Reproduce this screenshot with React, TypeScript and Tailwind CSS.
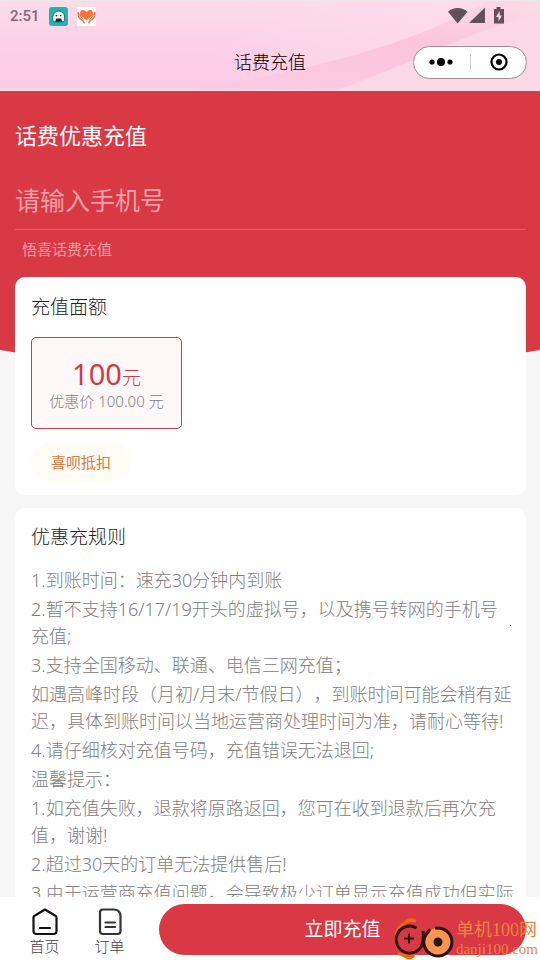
import React from "react";

const rules = [
  "1.到账时间：速充30分钟内到账",
  "2.暂不支持16/17/19开头的虚拟号，以及携号转网的手机号充值;",
  "3.支持全国移动、联通、电信三网充值；",
  "如遇高峰时段（月初/月末/节假日），到账时间可能会稍有延迟，具体到账时间以当地运营商处理时间为准，请耐心等待!",
  "4.请仔细核对充值号码，充值错误无法退回;",
  "温馨提示：",
  "1.如充值失败，退款将原路返回，您可在收到退款后再次充值，谢谢!",
  "2.超过30天的订单无法提供售后!",
  "3.由于运营商充值问题，会导致极少订单显示充值成功但实际",
];

function GhostIcon() {
  return (
    <svg viewBox="0 0 19 19" className="size-[19px]" aria-hidden="true">
      <rect width="19" height="19" rx="3" fill="#1fb5b5" />
      <path d="M3.800 13.500V10a5.900 5.900 0 0 1 11.800 0v3.500l-1.500 1.300H5.300z" fill="#fff" stroke="#14403f" strokeWidth="0.7" />
      <circle cx="7.600" cy="8.700" r="0.8" fill="#222" />
      <circle cx="11.800" cy="8.700" r="0.8" fill="#222" />
      <path d="M7.200 11.500h5l1 3.200H6.200z" fill="#1c2b2b" />
    </svg>
  );
}

function HeartIcon() {
  return (
    <svg viewBox="0 0 19 19" className="size-[19px]" aria-hidden="true">
      <rect width="19" height="19" fill="#fff" />
      <path d="M9.500 13.500 3.500 8C2.500 5 3.500 3 5.800 3c1.700 0 3 1 3.700 2.200C10.200 4 11.500 3 13.200 3c2.300 0 3.300 2 2.300 5z" fill="#f4743b" />
      <path d="M1.300 5c-.5 5 1.500 7.500 4.500 8.500l1.700 2.800M17.700 5c.5 5-1.500 7.500-4.500 8.500l-1.700 2.800" fill="none" stroke="#f4743b" strokeWidth="1.500" />
      <path d="M3 6.500c.3 3 2.500 5 4.300 5.700M16 6.500c-.3 3-2.500 5-4.300 5.700" fill="none" stroke="#f4743b" strokeWidth="1.600" />
      <path d="M4.500 9.500 7 12l1.500 3M14.500 9.500 12 12l-1.500 3" fill="none" stroke="#fff" strokeWidth="0.800" />
    </svg>
  );
}

function StatusIcons() {
  return (
    <svg viewBox="0 0 58 18" className="h-[18px] w-[58px]" fill="#62505a" aria-hidden="true">
      <path d="M0 4.700C5.500-.3 14-.3 19.500 4.700L9.700 16.500z" />
      <path d="M37 .5V16H21z" />
      <path d="M48.500 0h4v2H56v14.500H46V2h2.500z" />
      <path d="M51.700 4 48 10h2.500v4.500L54 8.500h-2.300z" fill="#fbd3e6" />
    </svg>
  );
}

function HeaderWaves() {
  return (
    <svg viewBox="0 0 540 91" preserveAspectRatio="none" className="absolute inset-0 size-full" aria-hidden="true">
      <defs>
        <linearGradient id="base" x1="0" y1="0" x2="0" y2="1">
          <stop offset="0" stopColor="#fcdcea" />
          <stop offset="0.500" stopColor="#fdd1e8" />
          <stop offset="1" stopColor="#fccae3" />
        </linearGradient>
        <linearGradient id="wave" x1="0" y1="1" x2="1" y2="0">
          <stop offset="0" stopColor="#fccbe3" />
          <stop offset="0.600" stopColor="#fbc6dc" />
          <stop offset="1" stopColor="#fcdce6" />
        </linearGradient>
        <linearGradient id="glow" x1="0" y1="0" x2="1" y2="0">
          <stop offset="0" stopColor="#fcdce9" stopOpacity="0" />
          <stop offset="1" stopColor="#fcdcea" />
        </linearGradient>
      </defs>
      <rect width="540" height="91" fill="url(#base)" />
      <path d="M215 50C270 30 330 0 350 0h150c-70 45-170 70-285 85z" fill="url(#glow)" />
      <path d="M200 88C330 68 430 36 490 0h50v20C460 45 400 75 300 91H200z" fill="url(#wave)" />
      <path d="M335 91C410 65 470 30 540 14v77z" fill="#fcd8e7" />
      <rect width="540" height="1" fill="#efe6ec" />
      <rect y="90" width="540" height="1" fill="#fbe3ea" />
    </svg>
  );
}

function Watermark() {
  return (
    <div className="pointer-events-none absolute right-0 bottom-0 flex items-center font-normal text-[#f0843f]">
      <svg viewBox="0 0 64 44" className="h-[44px] w-[64px]" fill="none" aria-hidden="true">
        <path d="M24 3.500C18 1 15 3 12 6 3 10 0 21 4 31l3 4 2-2C3 25 4 13 14 8c3-2 5-2 10-1.500z" fill="#f4650f" />
        <path d="M6 36c5 2 9 3 18 1l-1 3c-1 3-6 4-9 2.500-2-1.500-5-2-8-4z" fill="#f4650f" />
        <path d="M24.500 12A13.500 13.500 0 1 0 29 31c2-4 3-8 2-16" stroke="#2b1414" strokeWidth="3" />
        <path d="M12 22.500h10M17 17.500v10" stroke="#2b1414" strokeWidth="2" />
        <circle cx="46" cy="26" r="14" fill="#fb9550" />
        <path d="M43 12.300A14 14 0 1 1 34 18.600q2-2 4-5.600" stroke="#2b1414" strokeWidth="3" />
        <circle cx="46" cy="26" r="4.500" fill="#2b1414" />
      </svg>
      <div className="pt-0.5 pr-0.5 font-['Liberation_Serif','Noto_Sans_CJK_SC',serif]">
        <p className="text-[18px] leading-[20px]">单机100网</p>
        <p className="text-[15px] leading-[18px]">danji100.com</p>
      </div>
    </div>
  );
}

export default function App() {
  return (
    <div className="relative flex h-screen flex-col overflow-hidden bg-[#f7f7f7] font-['Noto_Sans','Noto_Sans_CJK_SC',sans-serif] font-light">
      <header className="relative h-[91px] shrink-0">
        <HeaderWaves />
        <div className="relative flex h-8 items-center justify-between pr-[34px] pl-[10px]">
          <div className="flex items-center gap-[9px]">
            <span className="font-['Roboto',sans-serif] text-[15px] leading-none font-medium text-[#86667a]">2:51</span>
            <GhostIcon />
            <HeartIcon />
          </div>
          <StatusIcons />
        </div>
        <div className="relative grid h-[60px] grid-cols-[1fr_auto_1fr] items-center pr-[13px]">
          <h1 className="col-start-2 pl-[13px] text-[18px] leading-6 text-black">话费充值</h1>
          <div className="flex h-[33px] w-[114px] items-center justify-self-end rounded-full border border-[#a08c96] bg-white">
            <button type="button" aria-label="更多" className="flex flex-1 justify-center pr-0.5">
              <svg viewBox="0 0 24 10" className="h-[10px] w-6" aria-hidden="true">
                <circle cx="3" cy="5" r="2.600" />
                <circle cx="12" cy="5" r="4" />
                <circle cx="21" cy="5" r="2.600" />
              </svg>
            </button>
            <span className="h-4 w-px bg-[#d0d0d0]" />
            <button type="button" aria-label="关闭" className="flex flex-1 justify-center pl-0.5">
              <svg viewBox="0 0 18 18" className="size-[18px]" aria-hidden="true">
                <circle cx="9" cy="9" r="7.500" fill="none" stroke="#000" strokeWidth="2.200" />
                <circle cx="9" cy="9" r="3" />
              </svg>
            </button>
          </div>
        </div>
      </header>

      <main className="relative min-h-0 flex-1 overflow-hidden">
        <svg viewBox="0 0 540 284" preserveAspectRatio="none" className="absolute inset-x-0 top-0 h-[284px] w-full" aria-hidden="true">
          <path d="M0 0h540v259q-270 46-540 0z" fill="#d93845" />
        </svg>
        <div className="relative pt-[28px] pr-[14px] pl-[15px]">
          <label htmlFor="phone" className="block text-[22px] leading-8 font-normal text-white">话费优惠充值</label>
          <input
            id="phone"
            type="tel"
            placeholder="请输入手机号"
            className="mt-[20px] block h-[59px] w-full border-b border-[#e3606b] bg-transparent text-[25px] font-normal text-white outline-none placeholder:text-[#f0a0a6]"
          />
          <p className="mt-[7px] pl-[7px] text-[15px] leading-6 font-normal text-[#f0a0a6]">悟喜话费充值</p>

          <section className="mt-[16px] rounded-[10px] bg-white px-4 pt-4 pb-[14px]">
            <h3 className="text-[19px] leading-7 text-[#222]">充值面额</h3>
            <button type="button" className="mt-4 flex h-[92px] w-[151px] flex-col items-center justify-center rounded-[5px] border border-[#c8404f] bg-[#fef8f8] pt-[6px]">
              <span className="text-[29px] leading-[26px] font-normal text-[#d03a48]">
                100<span className="text-[19px] font-light">元</span>
              </span>
              <span className="text-[15px] leading-5 text-[#808080]">优惠价 100.00 元</span>
            </button>
            <button type="button" className="mt-[14px] block h-[38px] rounded-full bg-[#fffcf6] px-5 text-[15px] font-normal text-[#e07840]">喜呗抵扣</button>
          </section>

          <section className="relative mt-[13px] rounded-[10px] bg-white pt-[15px] pr-[11px] pl-4">
            <h3 className="text-[19px] leading-7 text-[#222]">优惠充规则</h3>
            <div className="mt-[16px] flex flex-col gap-0.5 text-[18px] leading-[27px] text-[#808080] [text-spacing-trim:space-all]">
              {rules.map((rule) => (
                <p key={rule}>{rule}</p>
              ))}
            </div>
            <span className="absolute top-[117px] right-[15px] size-px bg-[#555]" />
          </section>
        </div>
      </main>

      <footer className="relative flex h-[63px] shrink-0 items-center bg-white pt-[2px] pr-[14px] pl-3">
        <a href="#home" className="flex w-[65px] flex-col items-center pt-1 text-[15px] leading-5 text-[#444]">
          <svg viewBox="0 0 28 28" className="size-[28px]" fill="none" stroke="#111" strokeWidth="2.200" strokeLinejoin="round" strokeLinecap="round" aria-hidden="true">
            <path d="M4 7.500 14 1.500l10 6a2 2 0 0 1 1.500 2V23a3 3 0 0 1-3 3h-17a3 3 0 0 1-3-3V9.500a2 2 0 0 1 1.500-2zM9 20h10" />
          </svg>
          首页
        </a>
        <a href="#orders" className="flex w-[65px] flex-col items-center pt-1 text-[15px] leading-5 text-[#444]">
          <svg viewBox="0 0 28 28" className="size-[28px]" fill="none" stroke="#333" strokeWidth="2.200" strokeLinejoin="round" strokeLinecap="round" aria-hidden="true">
            <path d="M7 1.500H18q6.500.5 6.500 6.500v15a3 3 0 0 1-3 3H7a3 3 0 0 1-3-3V4.500a3 3 0 0 1 3-3zM9.500 14.500h9.500M9.500 19h9.500" />
          </svg>
          订单
        </a>
        <button type="button" className="ml-[17px] h-[51px] flex-1 rounded-full bg-[#d93845] text-[19px] font-normal text-white">立即充值</button>
        <Watermark />
      </footer>
    </div>
  );
}
